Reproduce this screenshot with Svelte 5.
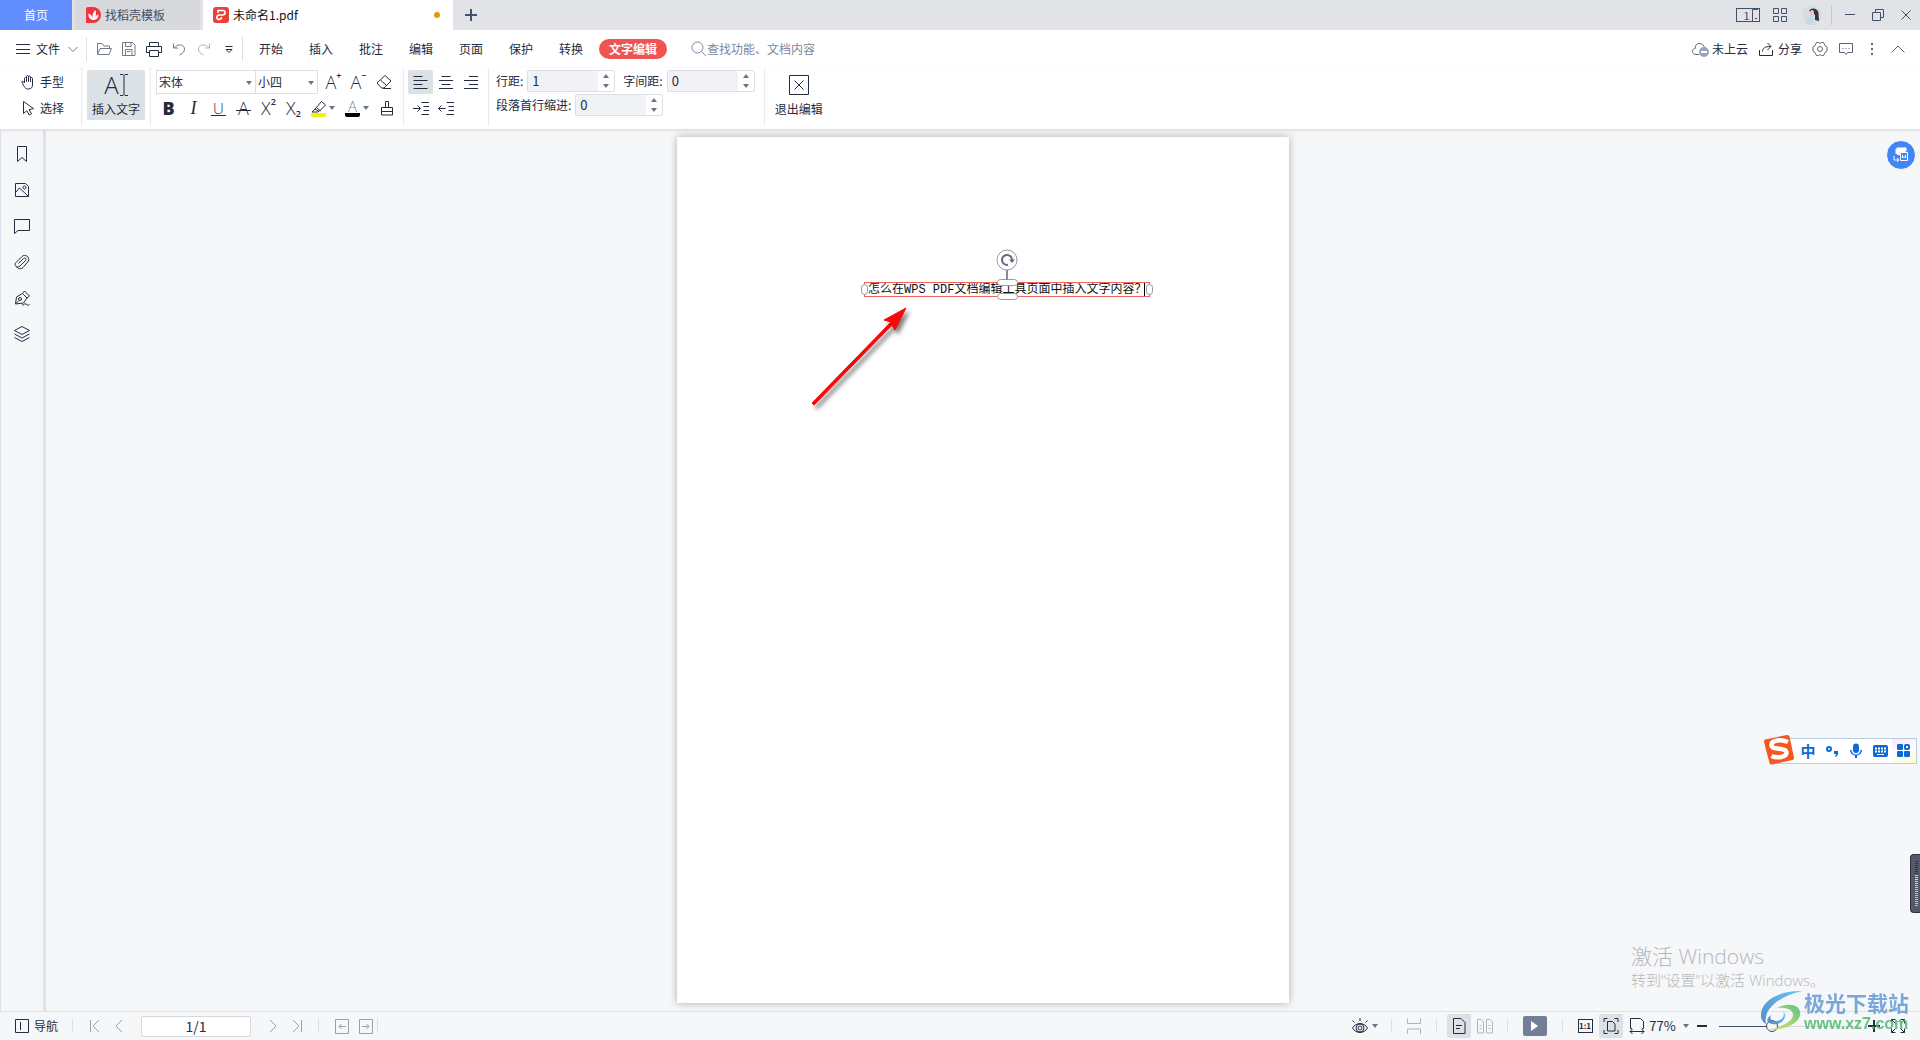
<script lang="ts">
  interface Icon {
    d: string
    fill?: string
    size?: number
  }

  const icons: Record<string, Icon> = {
    menu: { d: "M1 3.5h14M1 8.5h14M1 12.5h14" },
    folder: { d: "M1.5 13V2.500h4.500l2 2.500h5.500v2M1.500 13.500L4 7.500h11.500L13 13.500z" },
    save: { d: "M1.500 1.500h10l2.500 2.500v10.500H1.500zM4.500 1.500v4h5.500v-4M4.500 14.500v-6h6.500v6M6 10.500h3.500" },
    print: { d: "M3.500 5V1.500h9V5M3.500 11.500h-3V5.500h15v6h-3M3.500 9.500h9v6h-9z" },
    undo: { d: "M2.500 2.500v4.500h4.500M3 7C7 2 13.500 3.500 13.500 8c0 3-2 4.500-5 6" },
    redo: { d: "M13.500 2.500v4.500H9M13 7C9 2 2.500 3.500 2.500 8c0 3 2 4.500 5 6" },
    more: { d: "M4.500 5.500h7M5 8.500l3 3 3-3z" },
    down: { d: "M3.500 6l4.500 4.500L12.500 6" },
    up: { d: "M1.500 11.500L8 5l6.500 6.500" },
    search: { d: "M6.500 1a5.500 5.500 0 1 0 0 11a5.500 5.500 0 1 0 0-11M10.500 10.500l4.500 4.500" },
    hand: { d: "M4.500 9V4.500c0-1.500 2-1.500 2 0V7.500V2.500c0-1.300 2-1.300 2 0V7.500V3c0-1.300 2-1.300 2 0v5V4.500c0-1.300 2-1.300 2 0V11c0 2.500-1.500 4-4 4H8c-2 0-2.800-.8-3.800-2.500L2 8.500c-.5-1.200 1-1.800 1.600-.8z" },
    pointer: { d: "M3.500 1.500v12l3.300-2.700 2.500 4.200 2.200-1.200-2.400-4.200 4.400-1z" },
    eraser: { d: "M1 9L9 1.500l6 5.500-7 7H5.500zM4.500 6l6 5.500M7 14.500h8" },
    highlight: { d: "M4 9l6.500-7.500 4 3.500L8 11.500zM4 9l-3 3h5.500l1.500-1M5.500 7.500l4 3.500" },
    brush: { d: "M6.500 7.500v-6h3v6M2.500 7.500h11v7.500h-11zM2.500 11.500h11" },
    alignLeft: { d: "M.5 2.500h9M.5 6.500h14M.5 10.500h9M.5 14.500h14" },
    alignCenter: { d: "M3.500 2.500h9M1 6.500h14M3.500 10.500h9M1 14.500h14" },
    alignRight: { d: "M6 2.500h9M1 6.500h14M6 10.500h9M1 14.500h14" },
    indent: { d: "M8.500 2.500H16M10.500 6.500H16M10.500 10.500H16M8.500 14.500H16M0 8.500h7M4.500 5.500l3 3-3 3" },
    outdent: { d: "M8.500 2.500H16M10.500 6.500H16M10.500 10.500H16M8.500 14.500H16M.5 8.500h7M3.500 5.500l-3 3 3 3" },
    share: { d: "M1.500 9v5.500h13V9M4.500 10.500C4.500 7 7 5.500 12.500 5.500M9.500 2l3.500 3.500-3.500 3.500" },
    gear: { d: "M4.500 1.500h2l1.500 1 1.500-1h2l1.500 3 2 1.500v4l-2 1.500-1.500 3h-2l-1.500-1-1.500 1h-2L3 11.500 1 10V6l2-1.500zM8 5.500a2.500 2.500 0 1 0 0 5a2.500 2.500 0 1 0 0-5" },
    comment: { d: "M1.500 2.500h13v9H9.500L8 13.500 6.500 11.500h-5zM4.500 7.500h1M7.500 7.500h1M10.500 7.500h1" },
    dots: { d: "M7 2h2v2H7zM7 7h2v2H7zM7 12h2v2H7z", fill: "currentColor" },
    apps: { d: "M1.500 1.500h5v5h-5zM9.500 1.500h5v5h-5zM1.500 9.500h5v5h-5zM9.500 9.500h5v5h-5z" },
    minimize: { d: "M3 7.500h10" },
    restore: { d: "M2.500 5.500h8v8h-8zM5.500 5.500v-3h8v8h-3" },
    close: { d: "M3.500 3.500l9 9M12.500 3.500l-9 9" },
    plus: { d: "M8 2v12M2 8h12" },
    exit: { d: "M.5.5h19v19H.5zM5.500 5.500l9 9M14.500 5.500l-9 9", size: 20 },
    bookmark: { d: "M3.500.5h9v15L8 11.500 3.500 15.500z" },
    image: { d: "M1.500 1.500h10l3 3v10h-13zM2 10l3.500-4 8.500 8M10.500 4a1.500 1.500 0 1 0 0 3a1.500 1.500 0 1 0 0-3" },
    bubble: { d: "M.5 1.500h15v11H4L.5 15.500z" },
    clip: { d: "M4.500 9.500l5-5c1.500-1.500 3.500.5 2 2L6 12c-3 3-6.500-.5-4-3.500L8 2.500c3-3 8 .5 6.500 4.500l-5.500 6.500c-2.500 2.500-5.500 1-6.500-1" },
    pen: { d: "M1.500 14l1-7 6-3.500 4.500 4.500-3.500 5zM8.500 3.500l2-2.500 5 5-2.500 2M6 7.500a1.500 1.500 0 1 0 0 3a1.500 1.500 0 1 0 0-3M1.500 14l3.500-3.500M8 15c2 .5 2-2 4-1s1 2 3.500.5" },
    layers: { d: "M8 .5l7.500 4L8 8.500.5 4.500zM.5 8L8 12l7.500-4M.5 11.500L8 15.500l7.500-4" },
    nav: { d: "M1.500 1.500h13v13h-13zM6.500 4v8" },
    first: { d: "M3.500 2v12M12 2L6 8l6 6" },
    prev: { d: "M11 2L5 8l6 6" },
    next: { d: "M5 2l6 6-6 6" },
    last: { d: "M12.500 2v12M4 2l6 6-6 6" },
    back: { d: "M1.500 1.500h13v14h-13zM5 8.500h7M7.500 6L5 8.500 7.500 11" },
    forward: { d: "M1.500 1.500h13v14h-13zM4 8.500h7M8.500 6l2.500 2.500L8.500 11" },
    eye: { d: "M.5 10C4 4 12 4 15.500 10 12 16 4 16 .5 10zM8 6a4 4 0 1 0 0 8a4 4 0 1 0 0-8M8 8a2 2 0 1 0 0 4a2 2 0 1 0 0-4M8 0v3M.500 2.500l2 2M15.500 2.500l-2 2" },
    split: { d: "M1.500.5v5h13v-5M1.500 16v-5h13v5" },
    single: { d: "M2.500.5h7.500l4 4v11H2.500zM5 7.500h6M5 10.500h4" },
    double: { d: "M.5 1.500h3.500l2.500 2.500v11h-6zM9.500 1.500H13l2.500 2.500v11h-6zM2.500 7.500h2M2.500 10.500h2M11.500 7.500h2M11.500 10.500h2" },
    fit: { d: "M4.500 3.500h5l2.500 2.500v7H4.500zM1 4V.5h3.500M11.500.5H15V4M1 12v3.500h3.500M11.500 15.500H15V12" },
    width: { d: "M3 10.500H1.500V.5h10l3 3v7H13M1 13.500h14M3.500 11L1 13.500 3.500 16M12.500 11l2.500 2.500-2.500 2.500" },
    full: { d: "M1.500 5.500v-4h4M10.500 1.500h4v4M1.500 10.500v4h4M14.500 10.500v4h-4M1.500 1.500L6 6M14.500 1.500L10 6M1.500 14.500L6 10M14.500 14.500L10 10" },
    mic: { d: "M5 3.500a3 3 0 0 1 6 0V7a3 3 0 0 1-6 0zM2 7h1.500a4.500 4.500 0 0 0 9 0H14a6 6 0 0 1-5 5.500V15H7v-2.500A6 6 0 0 1 2 7z", fill: "currentColor" },
  }

  const quickTools = [
    { icon: "folder", label: "打开", tone: "mid" },
    { icon: "save", label: "保存", tone: "mid" },
    { icon: "print", label: "打印", tone: "" },
    { icon: "undo", label: "撤销", tone: "mid" },
    { icon: "redo", label: "恢复", tone: "faint" },
    { icon: "more", label: "更多", tone: "" },
  ]
  const menus = ["开始", "插入", "批注", "编辑", "页面", "保护", "转换"]
  const sideTools = [
    { icon: "bookmark", label: "书签" },
    { icon: "image", label: "缩略图" },
    { icon: "bubble", label: "批注" },
    { icon: "clip", label: "附件" },
    { icon: "pen", label: "签名" },
    { icon: "layers", label: "图层" },
  ]
  const alignments = ["alignLeft", "alignCenter", "alignRight"]
  const meterBars = Array.from({ length: 23 }, (_, i) =>
    i < 7 ? "#33363f" : `hsl(${45 + (i - 7) * 8} 70% 68%)`,
  )

  let align = $state("alignLeft")
  let lineGap = $state("1")
  let charGap = $state("0")
  let firstIndent = $state("0")
  let pageLabel = $state("1/1")
  let zoom = $state(77)
  let content = $state("怎么在WPS PDF文档编辑工具页面中插入文字内容？")
</script>

{#snippet icon(name: string)}
  {@const item = icons[name]}
  {@const size = item.size ?? 16}
  <svg
    class="icon"
    width={size}
    height={size}
    viewBox="0 0 {size} {size}"
    fill={item.fill ?? "none"}
    stroke={item.fill ? "none" : "currentColor"}
    aria-hidden="true"
  >
    <path d={item.d} />
  </svg>
{/snippet}

{#snippet caret()}
  <svg class="caret" width="6" height="4" viewBox="0 0 6 4" aria-hidden="true">
    <path d="M0 0h6L3 4z" />
  </svg>
{/snippet}

{#snippet arrows(label: string)}
  <span class="arrows">
    <button type="button" aria-label="增加{label}">
      <svg width="6" height="4" viewBox="0 0 6 4"><path d="M0 4h6L3 0z" /></svg>
    </button>
    <button type="button" aria-label="减少{label}">{@render caret()}</button>
  </span>
{/snippet}

<div class="app">
  <header class="titlebar">
    <button type="button" class="tab home">首页</button>
    <button type="button" class="tab template">
      <svg width="15" height="16" viewBox="0 0 15 16">
        <path d="M0 2a2 2 0 0 1 2-2h5a8 8 0 0 1 0 16H0z" fill="#f2353f" />
        <path d="M7 13C3 12 2 9 2.500 6.500 5 7.500 6.500 9 7 12 6 8 7 5 9.500 3c1 3 .5 6-1 8.500C9 9.500 10.500 8 12.500 7.500 12.500 10.500 11 13 7 13z" fill="#fff" />
      </svg>
      找稻壳模板
    </button>
    <button type="button" class="tab document">
      <svg width="16" height="16" viewBox="0 0 16 16">
        <rect width="16" height="16" rx="3" fill="#e8413c" />
        <path d="M5 6V3.500h4.500c3.500 0 3.500 4.500 0 4.500H6.500c-3.500 0-3.500 4.500-.5 4.500 1.800 0 2.500-1 2.500-2.500" fill="none" stroke="#fff" stroke-width="1.600" />
      </svg>
      未命名1.pdf
      <span class="unsaved"></span>
    </button>
    <button type="button" class="new-tab" aria-label="新建标签">{@render icon("plus")}</button>
    <div class="window-tools">
      <button type="button" class="tab-count" aria-label="标签列表">
        1
        <svg width="7" height="13" viewBox="0 0 7 13"><path d="M6 .5H.5v12H6M3 9.500h2" /></svg>
      </button>
      <button type="button" class="apps" aria-label="应用">{@render icon("apps")}</button>
      <svg class="avatar" width="20" height="20" viewBox="0 0 20 20" aria-hidden="true">
        <circle cx="10" cy="10" r="10" fill="#d3dfe5" />
        <path d="M7 6c2-4 9-3 9.500 2L17 16l-4-1 0-5-3-3z" fill="#37313a" />
        <ellipse cx="10" cy="8" rx="2" ry="3" fill="#e7c4b8" />
        <path d="M4 18c0-4 3-7 7-7l1 9c-3 0-6-.5-8-2z" fill="#c3dbe2" />
      </svg>
      <span class="window-line"></span>
      <button type="button" aria-label="最小化">{@render icon("minimize")}</button>
      <button type="button" aria-label="还原">{@render icon("restore")}</button>
      <button type="button" aria-label="关闭">{@render icon("close")}</button>
    </div>
  </header>

  <nav class="menubar">
    <button type="button" class="file">
      {@render icon("menu")}
      文件
      <span class="mid">{@render icon("down")}</span>
    </button>
    <span class="rule"></span>
    <div class="quick">
      {#each quickTools as tool}
        <button type="button" class={tool.tone} aria-label={tool.label}>{@render icon(tool.icon)}</button>
      {/each}
    </div>
    <span class="rule"></span>
    <div class="menus">
      {#each menus as menu}
        <button type="button">{menu}</button>
      {/each}
    </div>
    <button type="button" class="current-menu">文字编辑</button>
    <label class="search">
      {@render icon("search")}
      <input type="text" placeholder="查找功能、文档内容" aria-label="查找功能" />
    </label>
    <div class="menu-right">
      <button type="button" class="cloud">
        <svg width="17" height="16" viewBox="0 0 17 16" fill="none" aria-hidden="true">
          <path d="M7 13.500H4C1.500 13.500.5 12 .5 10.300S2 7.500 3.200 7.500C3 4 5 2.500 7.500 2.500S12 4.500 12.500 6.500" stroke="#5c6576" />
          <circle cx="12" cy="11" r="5" fill="#9ba4b8" />
          <path d="M9 11h6" stroke="#fff" stroke-width="2" />
        </svg>
        未上云
      </button>
      <button type="button" class="share">{@render icon("share")}分享</button>
      <button type="button" class="small-tool" aria-label="设置">{@render icon("gear")}</button>
      <button type="button" class="small-tool" aria-label="反馈">{@render icon("comment")}</button>
      <button type="button" class="small-tool" aria-label="更多">{@render icon("dots")}</button>
      <button type="button" class="small-tool" aria-label="收起功能区">{@render icon("up")}</button>
    </div>
  </nav>

  <section class="ribbon" aria-label="文字编辑">
    <div class="group modes">
      <button type="button">{@render icon("hand")}手型</button>
      <button type="button">{@render icon("pointer")}选择</button>
    </div>
    <div class="group insert">
      <button type="button" class="big active">
        <span class="big-icon">
          A
          <svg width="8" height="22" viewBox="0 0 8 22"><path d="M0 .5h3l1 1 1-1h3M4 1.500v19M0 21.500h3l1-1 1 1h3" /></svg>
        </span>
        插入文字
      </button>
    </div>
    <div class="group fonts">
      <div class="line">
        <span class="select family">
          <select aria-label="字体"><option>宋体</option></select>
          {@render caret()}
        </span>
        <span class="select size">
          <select aria-label="字号"><option>小四</option></select>
          {@render caret()}
        </span>
        <button type="button" class="tool letter" aria-label="增大字号">A<sup>+</sup></button>
        <button type="button" class="tool letter" aria-label="减小字号">A<sup>−</sup></button>
        <button type="button" class="tool" aria-label="清除格式">{@render icon("eraser")}</button>
      </div>
      <div class="line">
        <button type="button" class="tool letter bold" aria-label="加粗">B</button>
        <button type="button" class="tool letter italic" aria-label="倾斜">I</button>
        <button type="button" class="tool letter underline" aria-label="下划线"><span>U</span></button>
        <button type="button" class="tool letter strike" aria-label="删除线"><span>A</span></button>
        <button type="button" class="tool letter" aria-label="上标">X<sup>2</sup></button>
        <button type="button" class="tool letter" aria-label="下标">X<sub>2</sub></button>
        <button type="button" class="tool wide" aria-label="突出显示">
          <span class="swatch">{@render icon("highlight")}</span>
          {@render caret()}
        </button>
        <button type="button" class="tool wide" aria-label="字体颜色">
          <span class="swatch black">A</span>
          {@render caret()}
        </button>
        <button type="button" class="tool" aria-label="格式刷">{@render icon("brush")}</button>
      </div>
    </div>
    <div class="group aligns">
      <div class="line">
        {#each alignments as name}
          <button type="button" class="tool" class:active={align === name} aria-label={name} onclick={() => (align = name)}>
            {@render icon(name)}
          </button>
        {/each}
      </div>
      <div class="line">
        <button type="button" class="tool" aria-label="增加缩进">{@render icon("indent")}</button>
        <button type="button" class="tool" aria-label="减少缩进">{@render icon("outdent")}</button>
      </div>
    </div>
    <div class="group spacing">
      <div class="fields">
        <label for="line-gap">行距:</label>
        <span class="spin"><input id="line-gap" type="text" bind:value={lineGap} />{@render arrows("行距")}</span>
        <label for="char-gap" class="second">字间距:</label>
        <span class="spin"><input id="char-gap" type="text" bind:value={charGap} />{@render arrows("字间距")}</span>
      </div>
      <div class="fields">
        <label for="first-indent">段落首行缩进:</label>
        <span class="spin"><input id="first-indent" type="text" bind:value={firstIndent} />{@render arrows("缩进")}</span>
      </div>
    </div>
    <div class="group leave">
      <button type="button" class="big">
        <span class="big-icon">{@render icon("exit")}</span>
        退出编辑
      </button>
    </div>
  </section>

  <div class="workspace">
    <aside class="sidebar">
      {#each sideTools as tool}
        <button type="button" aria-label={tool.label}>{@render icon(tool.icon)}</button>
      {/each}
    </aside>

    <main class="canvas">
      <article class="page">
        <div class="textbox">
          <input type="text" aria-label="文字内容" bind:value={content} />
          <span class="cursor"></span>
          <span class="grip left"></span>
          <span class="grip right"></span>
          <span class="grip top"></span>
          <span class="grip bottom"></span>
          <svg class="rotate" width="22" height="31" viewBox="0 0 22 31" aria-hidden="true">
            <circle cx="11" cy="11" r="10" fill="#fff" stroke="#969ba8" />
            <path d="M11 21v10" stroke="#858b99" stroke-width="2" />
            <path d="M12 15.800A5 5 0 1 1 16 11" fill="none" stroke="#646c7e" stroke-width="2" />
            <path d="M13 10.500h6L16 14z" fill="#646c7e" />
          </svg>
        </div>
        <svg class="pointer-arrow" width="110" height="112" viewBox="0 0 110 112" aria-hidden="true">
          <path d="M7 100L86 19l-7-2L101 5 90 27l-3-5L9 102z" fill="#f80808" stroke="#f80808" />
        </svg>
      </article>

      <button type="button" class="convert" aria-label="PDF转Word">
        <svg width="16" height="16" viewBox="0 0 16 16">
          <path d="M3.500 1.500h9v3M3.500 2v5" fill="none" stroke="#fff" stroke-width="2" />
          <path d="M4 2h8v4H7v2H4z" fill="#fff" />
          <path d="M7.500 5.500h7v8h-7zM9.500 8v3l1.500-1.500 1.500 1.500V8M1 9v4h5M4 11l2 2-2 2" fill="#4285f4" stroke="#fff" />
        </svg>
      </button>

      <div class="meter">
        {#each meterBars as color}
          <span style="background: {color}"></span>
        {/each}
      </div>

      <div class="activate">
        <p class="activate-title">激活 Windows</p>
        <p>转到“设置”以激活 Windows。</p>
      </div>
    </main>
  </div>

  <footer class="statusbar">
    <button type="button" class="nav">{@render icon("nav")}导航</button>
    <span class="rule"></span>
    <div class="pager">
      <button type="button" aria-label="第一页">{@render icon("first")}</button>
      <button type="button" aria-label="上一页">{@render icon("prev")}</button>
      <input type="text" aria-label="页码" bind:value={pageLabel} />
      <button type="button" aria-label="下一页">{@render icon("next")}</button>
      <button type="button" aria-label="最后一页">{@render icon("last")}</button>
    </div>
    <span class="rule"></span>
    <div class="history">
      <button type="button" aria-label="后退">{@render icon("back")}</button>
      <button type="button" aria-label="前进">{@render icon("forward")}</button>
    </div>
    <span class="rule"></span>

    <div class="views">
      <button type="button" class="eye" aria-label="护眼模式">{@render icon("eye")}{@render caret()}</button>
      <span class="rule"></span>
      <button type="button" class="faint" aria-label="连续阅读">{@render icon("split")}</button>
      <span class="rule"></span>
      <div class="view-set">
        <button type="button" class="active" aria-label="单页">{@render icon("single")}</button>
        <button type="button" class="faint" aria-label="双页">{@render icon("double")}</button>
      </div>
      <span class="rule"></span>
      <button type="button" class="play" aria-label="播放">
        <svg width="8" height="10" viewBox="0 0 8 10"><path d="M0 0l7 5-7 5z" fill="#fff" /></svg>
      </button>
      <span class="rule"></span>
      <div class="view-set">
        <button type="button" class="actual" aria-label="实际大小"><span>1:1</span></button>
        <button type="button" class="active" aria-label="适合页面">{@render icon("fit")}</button>
        <button type="button" aria-label="适合宽度">{@render icon("width")}</button>
      </div>
      <button type="button" class="percent">{zoom}%{@render caret()}</button>
      <button type="button" class="minus" aria-label="缩小"></button>
      <input class="zoom" type="range" min="20" max="180" aria-label="缩放" bind:value={zoom} />
      <button type="button" class="add" aria-label="放大">
        <svg width="12" height="12" viewBox="0 0 12 12"><path d="M6 0v12M0 6h12" /></svg>
      </button>
      <button type="button" aria-label="全屏">{@render icon("full")}</button>
    </div>
  </footer>

  <div class="ime">
    <svg class="ime-logo" width="32" height="32" viewBox="0 0 32 32" aria-hidden="true">
      <path d="M2 5.500L24 1q2-.3 2.500 1.500l4.500 21q.3 2-1.500 2.500L9 30.500q-2 .3-2.500-1.500L1 8q-.3-2 1-2.500z" fill="#f4581f" />
      <path d="M25 8C18 5 8 6 8.500 11.500c.5 5 15 1.500 15 7 0 5-10 6-15 3.500" fill="none" stroke="#fff" stroke-width="4.500" />
    </svg>
    <button type="button">中</button>
    <button type="button" aria-label="标点">
      <svg width="12" height="12" viewBox="0 0 12 12">
        <circle cx="3" cy="4" r="2" fill="none" stroke="currentColor" stroke-width="2" />
        <path d="M8 6h4v3q-1 3-3 3l1-3H8z" fill="currentColor" />
      </svg>
    </button>
    <button type="button" aria-label="语音">{@render icon("mic")}</button>
    <button type="button" aria-label="键盘">
      <svg width="15" height="12" viewBox="0 0 15 12">
        <rect width="15" height="12" rx="2" fill="currentColor" />
        <path d="M2 3.500h11M2 6.500h11" stroke="#fff" stroke-width="2" stroke-dasharray="2 1" />
        <path d="M4 9.500h7" stroke="#fff" />
      </svg>
    </button>
    <button type="button" class="ime-apps" aria-label="工具箱">
      <svg width="14" height="14" viewBox="0 0 14 14">
        <rect width="6" height="6" rx="1" fill="currentColor" />
        <rect y="7" width="6" height="6" rx="1" fill="currentColor" />
        <rect x="7" y="7" width="6" height="6" rx="1" fill="currentColor" />
        <rect x="8" y="1" width="4" height="4" rx="1" fill="none" stroke="currentColor" stroke-width="2" />
      </svg>
    </button>
  </div>

  <div class="site">
    <svg width="42" height="42" viewBox="0 0 42 42" aria-hidden="true">
      <defs>
        <linearGradient id="swirl-blue" x1="0" y1="1" x2="1" y2="0">
          <stop offset="0" stop-color="#4a7fc4" />
          <stop offset="1" stop-color="#55c3f5" />
        </linearGradient>
        <linearGradient id="swirl-green" x1="0" y1="1" x2="1" y2="0">
          <stop offset="0" stop-color="#e9e45c" />
          <stop offset="1" stop-color="#4fbd78" />
        </linearGradient>
      </defs>
      <path d="M42 1C22 0 0 10 1 26c0 4 3 7 5 8C3 21 16 7 42 1z" fill="url(#swirl-blue)" />
      <path d="M23 21c3 5-2 11-9 10-4-1-4-4-3-6-5 3-5 8 1 9 9 2 17-7 11-13z" fill="url(#swirl-blue)" />
      <path d="M17 18c13-7 25-2 23 7-2 10-18 16-36 15 14-1 29-8 29-15 0-6-8-8-16-7z" fill="url(#swirl-green)" />
    </svg>
    <div>
      <p class="site-name">极光下载站</p>
      <p class="site-url">www.xz7.com</p>
    </div>
  </div>
</div>

<style>
  :global(body) {
    margin: 0;
  }

  .app {
    position: relative;
    display: flex;
    flex-direction: column;
    min-height: 100vh;
    background: #f5f7f9;
    color: #232c41;
    font-family: "Noto Sans CJK SC", sans-serif;
    font-size: 12px;
    line-height: 16px;
    overflow: hidden;
  }

  button,
  input,
  select {
    box-sizing: border-box;
    margin: 0;
    border: 0;
    padding: 0;
    background: none;
    color: inherit;
    font: inherit;
    outline: none;
  }

  button {
    display: flex;
    align-items: center;
    justify-content: center;
    white-space: nowrap;
  }

  p {
    margin: 0;
  }

  svg {
    flex: none;
  }

  .caret,
  .arrows svg {
    fill: #69748a;
  }

  .rule {
    width: 1px;
    height: 24px;
    background: #dcdfe4;
  }

  .mid {
    display: flex;
    color: #737b8b;
  }

  .faint {
    color: #b1b4ba;
  }

  .active {
    background: #dce1e6;
    border-radius: 2px;
  }

  /* title bar */
  .titlebar {
    display: flex;
    height: 30px;
    background: #e1e3e7;
  }

  .tab {
    gap: 4px;
  }

  .home {
    width: 72px;
    background: #618dff;
    color: #fff;
  }

  .template {
    justify-content: flex-start;
    width: 125px;
    margin: 0 3px;
    padding-left: 11px;
    background: #d7d9dd;
    color: #464e60;
  }

  .document {
    justify-content: flex-start;
    width: 250px;
    padding: 0 13px 0 10px;
    background: #fff;
    color: #111;
  }

  .unsaved {
    width: 6px;
    height: 6px;
    margin-left: auto;
    border-radius: 50%;
    background: #e69a00;
  }

  .new-tab {
    width: 36px;
    color: #44516c;
  }

  .new-tab .icon {
    stroke-width: 2;
  }

  .window-tools {
    display: flex;
    align-items: center;
    margin-left: auto;
    color: #44516c;
  }

  .window-tools button {
    width: 28px;
    height: 30px;
  }

  .window-tools .tab-count {
    width: 24px;
    height: 14px;
    padding-left: 6px;
    gap: 2px;
    border: 1px solid #44516c;
    font-size: 11px;
  }

  .tab-count svg {
    fill: none;
    stroke: #44516c;
  }

  .window-tools .apps {
    width: 40px;
  }

  .avatar {
    margin: 0 9px 0 2px;
  }

  .window-line {
    width: 1px;
    height: 20px;
    margin-right: 4px;
    background: #c4c8cf;
  }

  /* menu row */
  .menubar {
    display: flex;
    align-items: center;
    height: 38px;
    background: #fff;
  }

  .file {
    gap: 5px;
    width: 86px;
    padding-left: 10px;
  }

  .quick {
    display: flex;
    padding: 0 1px 0 4px;
  }

  .quick button {
    width: 25px;
    height: 24px;
  }

  .menus {
    display: flex;
    padding: 0 3px;
  }

  .menus button {
    width: 50px;
    height: 24px;
  }

  .current-menu {
    width: 68px;
    height: 20px;
    border-radius: 10px;
    background: #ed5452;
    color: #fff;
    font-weight: 700;
  }

  .search {
    display: flex;
    align-items: center;
    margin-left: 24px;
    color: #7b879d;
  }

  .search input {
    width: 130px;
  }

  .search input::placeholder {
    color: #7b879d;
    opacity: 1;
  }

  .menu-right {
    display: flex;
    align-items: center;
    margin-left: auto;
    padding-right: 9px;
  }

  .cloud {
    gap: 3px;
  }

  .share {
    gap: 4px;
    margin: 0 5px 0 10px;
  }

  .small-tool {
    width: 26px;
    height: 24px;
    color: #5c6576;
  }

  /* ribbon */
  .ribbon {
    position: relative;
    display: flex;
    height: 61px;
    background: #fff;
    border-bottom: 1px solid #dfe1e5;
    box-shadow: 0 1px 3px rgb(0 0 0 / 8%);
  }

  .group {
    box-sizing: border-box;
    display: flex;
    flex-direction: column;
    gap: 2px;
    height: 58px;
    padding-top: 2px;
    border-right: 1px solid #e8eaed;
  }

  .leave {
    border-right: 0;
    padding-left: 5px;
  }

  .line {
    display: flex;
    align-items: center;
    height: 24px;
  }

  .modes {
    width: 82px;
    padding-left: 20px;
  }

  .modes button {
    justify-content: flex-start;
    gap: 4px;
    height: 24px;
  }

  .insert {
    padding-left: 5px;
    padding-right: 5px;
  }

  .big {
    flex-direction: column;
    gap: 4px;
    width: 58px;
    height: 50px;
  }

  .big-icon {
    display: flex;
    align-items: center;
    gap: 1px;
    height: 24px;
    font-family: "Open Sans", sans-serif;
    font-size: 24px;
    font-weight: 300;
  }

  .big-icon svg {
    fill: none;
    stroke: currentColor;
  }

  .fonts {
    padding: 2px 4px 0 5px;
  }

  .select {
    position: relative;
    box-sizing: border-box;
    height: 24px;
    border: 1px solid #dcdfe4;
  }

  .select select {
    appearance: none;
    width: 100%;
    height: 22px;
    padding-left: 2px;
  }

  .select .caret {
    position: absolute;
    right: 3px;
    top: 10px;
    pointer-events: none;
  }

  .family {
    width: 100px;
  }

  .size {
    width: 63px;
    margin: 0 3px 0 -1px;
  }

  .tool {
    width: 25px;
    height: 24px;
  }

  .wide {
    gap: 3px;
    width: 34px;
  }

  .letter {
    font-family: "Open Sans", sans-serif;
    font-size: 18px;
    font-weight: 300;
  }

  .letter sup,
  .letter sub {
    font-size: 9px;
    line-height: 12px;
    font-weight: 600;
  }

  .letter sup {
    align-self: flex-start;
  }

  .letter sub {
    align-self: flex-end;
  }

  .bold {
    font-weight: 800;
  }

  .italic {
    font-family: "Liberation Serif", serif;
    font-style: italic;
    font-weight: 400;
  }

  .underline span {
    width: 15px;
    border-bottom: 1px solid currentColor;
    font-size: 15px;
    line-height: 14px;
  }

  .strike span {
    width: 15px;
    background: linear-gradient(currentColor, currentColor) 0 10px / 100% 1px no-repeat;
  }

  .swatch {
    box-sizing: border-box;
    display: flex;
    justify-content: center;
    width: 15px;
    height: 17px;
    border-bottom: 4px solid #f5f200;
    border-radius: 2px;
    font-family: "Open Sans", sans-serif;
    font-size: 15px;
    line-height: 13px;
    font-weight: 300;
  }

  .black {
    border-color: #000;
    color: #737b8b;
  }

  .aligns {
    width: 85px;
    padding-left: 4px;
  }

  .spacing {
    padding: 2px 9px 0 7px;
  }

  .fields {
    display: flex;
    align-items: center;
    gap: 4px;
    height: 22px;
  }

  .second {
    margin-left: 4px;
  }

  .spin {
    box-sizing: border-box;
    display: flex;
    width: 88px;
    height: 22px;
    border: 1px solid #dcdfe4;
    border-radius: 2px;
  }

  .spin input {
    width: 70px;
    padding-left: 4px;
    background: #f1f2f5;
    font-size: 13px;
  }

  .arrows {
    display: flex;
    flex-direction: column;
    flex: 1;
  }

  .arrows button {
    flex: 1;
  }

  /* workspace */
  .workspace {
    display: flex;
    flex: 1;
  }

  .sidebar {
    box-sizing: border-box;
    display: flex;
    flex-direction: column;
    width: 46px;
    padding-top: 6px;
    border-left: 1px solid #e1e3e8;
    border-right: 3px solid #e1e3e8;
  }

  .sidebar button {
    height: 36px;
  }

  .canvas {
    position: relative;
    flex: 1;
    padding: 7px 0 6px;
  }

  .page {
    position: relative;
    width: 612px;
    height: 866px;
    margin: 0 auto;
    background: #fff;
    box-shadow: 0 0 8px rgb(0 0 0 / 30%);
  }

  .textbox {
    position: absolute;
    left: 187px;
    top: 145px;
    box-sizing: border-box;
    width: 286px;
    height: 15px;
    border: 1px solid #f0625c;
  }

  .textbox input {
    display: block;
    width: 100%;
    height: 15px;
    padding-left: 3px;
    color: #111;
    font-family: "Liberation Mono", "Noto Sans CJK SC", monospace;
    line-height: 15px;
  }

  .cursor {
    position: absolute;
    right: 4px;
    top: 0;
    width: 1px;
    height: 13px;
    background: #000;
  }

  .grip {
    position: absolute;
    box-sizing: border-box;
    border: 1px solid #969ba8;
    border-radius: 4px;
    background: #fff;
  }

  .left,
  .right {
    top: 1px;
    width: 7px;
    height: 11px;
  }

  .left {
    left: -4px;
  }

  .right {
    right: -4px;
  }

  .top,
  .bottom {
    left: 132px;
    width: 21px;
    height: 7px;
  }

  .top {
    top: -4px;
  }

  .bottom {
    bottom: -4px;
  }

  .rotate {
    position: absolute;
    left: 131px;
    top: -34px;
  }

  .pointer-arrow {
    position: absolute;
    left: 128px;
    top: 166px;
    filter: drop-shadow(3px 4px 2px rgb(0 0 0 / 50%));
  }

  .convert {
    position: absolute;
    right: 4px;
    top: 10px;
    width: 30px;
    height: 30px;
    border: 1px solid #fff;
    border-radius: 50%;
    background: #4285f4;
  }

  .meter {
    position: absolute;
    right: 0;
    top: 724px;
    box-sizing: border-box;
    display: flex;
    flex-direction: column;
    gap: 1px;
    width: 10px;
    height: 59px;
    padding: 6px 2px 0 4px;
    border: 1px solid #2f323b;
    border-right: 0;
    border-radius: 4px 0 0 4px;
    background: #555a69;
  }

  .meter span {
    height: 1px;
  }

  .activate {
    position: absolute;
    right: 0;
    bottom: 21px;
    width: 289px;
    color: #b5b7b9;
    font-family: "Open Sans", "Noto Sans CJK SC", sans-serif;
    font-size: 15px;
    font-weight: 300;
    line-height: 20px;
  }

  .activate-title {
    font-size: 21px;
    line-height: 28px;
  }

  /* status bar */
  .statusbar {
    display: flex;
    align-items: center;
    height: 28px;
    border-top: 1px solid #dfe1e5;
  }

  .statusbar .rule {
    height: 14px;
  }

  .nav {
    gap: 4px;
    width: 72px;
  }

  .pager {
    display: flex;
    align-items: center;
    padding: 0 9px;
    color: #9b9fa8;
  }

  .pager button {
    width: 24px;
    height: 24px;
  }

  .pager button:first-child {
    margin-left: 1px;
  }

  .pager input {
    width: 110px;
    height: 21px;
    margin: 0 10px;
    border: 1px solid #d5d8dd;
    border-radius: 2px;
    background: #fff;
    color: #232c41;
    font-size: 14px;
    text-align: center;
  }

  .history {
    display: flex;
    gap: 8px;
    padding: 0 3px 0 15px;
    color: #9b9fa8;
  }

  .views {
    display: flex;
    align-items: center;
    margin-left: auto;
    padding-right: 10px;
  }

  .view-set {
    display: flex;
    gap: 2px;
  }

  .views button {
    width: 24px;
    height: 24px;
  }

  .views .rule {
    margin: 0 10px;
  }

  .views .eye {
    gap: 4px;
    width: 32px;
  }

  .views .play {
    height: 20px;
    margin: 0 5px;
    border-radius: 2px;
    background: #737f98;
  }

  .actual span {
    width: 13px;
    border: 1px solid #232c41;
    font-size: 8px;
    font-weight: 700;
    line-height: 12px;
    text-align: center;
  }

  .views .percent {
    gap: 7px;
    width: 40px;
    font-size: 13px;
  }

  .views .minus {
    width: 10px;
    height: 2px;
    margin: 0 12px 0 8px;
    background: #232c41;
  }

  .zoom {
    appearance: none;
    width: 143px;
    height: 14px;
    background: linear-gradient(90deg, #44516c 53px, #d5d8dd 53px) center / 100% 1px no-repeat;
  }

  .zoom::-webkit-slider-thumb {
    appearance: none;
    box-sizing: border-box;
    width: 12px;
    height: 12px;
    border: 1px solid #4a4a52;
    border-radius: 50%;
    background: #f5f7f9;
  }

  .add svg {
    stroke: currentColor;
    stroke-width: 2;
  }

  /* input method bar floating over the canvas */
  .ime {
    position: absolute;
    right: 3px;
    top: 738px;
    box-sizing: border-box;
    display: flex;
    align-items: center;
    height: 26px;
    padding-left: 19px;
    border: 1px solid #b9cbe6;
    background: #fff;
    color: #0a6bd8;
  }

  .ime-logo {
    position: absolute;
    left: -14px;
    top: -5px;
  }

  .ime button {
    width: 24px;
    height: 24px;
    font-size: 15px;
    font-weight: 700;
  }

  .ime-apps {
    background: linear-gradient(160deg, #f9e3fb, #fff 50%, #fbf9d0);
  }

  .site {
    position: absolute;
    right: 11px;
    bottom: 6px;
    display: flex;
    gap: 2px;
    color: #6b9fd8;
    opacity: 0.9;
    pointer-events: none;
  }

  .site-name {
    font-size: 21px;
    font-weight: 700;
    line-height: 24px;
  }

  .site-url {
    color: #58bd78;
    font-family: "Liberation Sans", sans-serif;
    font-size: 16px;
    font-weight: 700;
    line-height: 20px;
  }
</style>
